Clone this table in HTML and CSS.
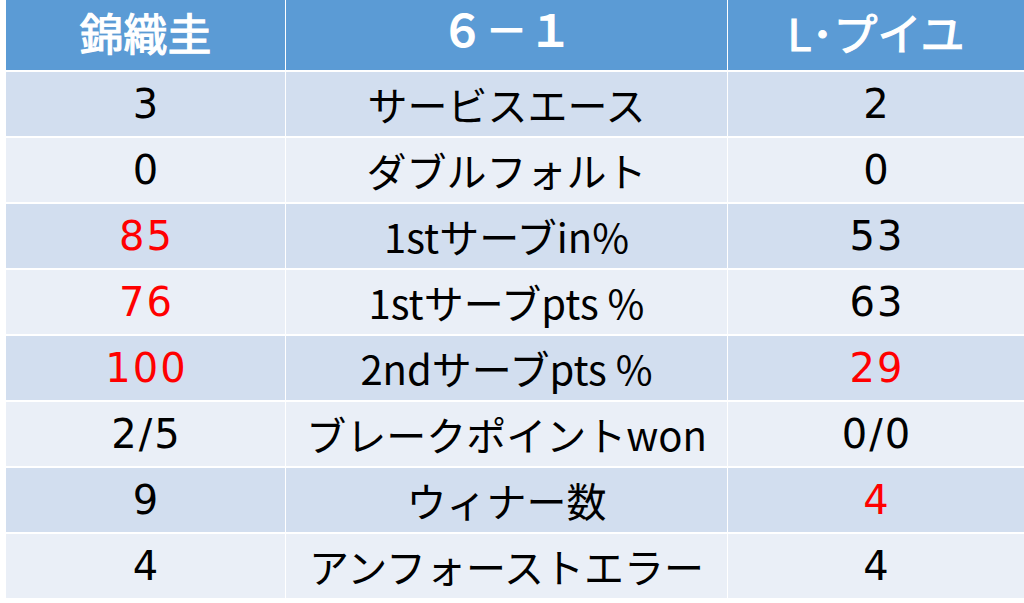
FILE: index.html
```html
<!DOCTYPE html>
<html lang="ja">
<head>
<meta charset="utf-8">
<link rel="stylesheet" href="styles.css">
</head>
<body>
<div class="table">
  <div class="cell head name">錦織圭</div>
  <div class="cell head score">６－１</div>
  <div class="cell head name">L･プイユ</div>

  <div class="cell odd num">3</div>
  <div class="cell odd label">サービスエース</div>
  <div class="cell odd num">2</div>

  <div class="cell even num">0</div>
  <div class="cell even label">ダブルフォルト</div>
  <div class="cell even num">0</div>

  <div class="cell odd num red">85</div>
  <div class="cell odd label">1stサーブin%</div>
  <div class="cell odd num">53</div>

  <div class="cell even num red">76</div>
  <div class="cell even label">1stサーブpts %</div>
  <div class="cell even num">63</div>

  <div class="cell odd num red">100</div>
  <div class="cell odd label">2ndサーブpts %</div>
  <div class="cell odd num red">29</div>

  <div class="cell even num">2/5</div>
  <div class="cell even label">ブレークポイントwon</div>
  <div class="cell even num">0/0</div>

  <div class="cell odd num">9</div>
  <div class="cell odd label">ウィナー数</div>
  <div class="cell odd num red">4</div>

  <div class="cell even num">4</div>
  <div class="cell even label">アンフォーストエラー</div>
  <div class="cell even num">4</div>
</div>
</body>
</html>
```

FILE: styles.css
```css
html, body {
  margin: 0;
  padding: 0;
  background: #ffffff;
}
body {
  width: 1024px;
  height: 603px;
  overflow: hidden;
  padding-left: 6px;
  box-sizing: border-box;
}
.table {
  display: grid;
  grid-template-columns: 279px 441px 296px;
  grid-template-rows: 70px repeat(8, 64px);
  column-gap: 1px;
  row-gap: 2px;
  background: #ffffff;
}
.cell {
  display: flex;
  align-items: center;
  justify-content: center;
  color: #000000;
  font-family: "Noto Sans CJK JP", "Noto Sans", sans-serif;
  font-size: 40px;
  line-height: 1;
  white-space: nowrap;
}
.head {
  background: #5b9bd5;
  color: #ffffff;
  font-weight: bold;
  font-size: 44px;
  padding-bottom: 6px;
  box-sizing: border-box;
}
.head.score {
  font-family: "DejaVu Sans", "Noto Sans CJK JP", sans-serif;
  font-size: 44px;
}
.head.name {
  font-weight: normal;
  -webkit-text-stroke: 1.2px #ffffff;
}
.odd {
  background: #d2deef;
}
.even {
  background: #eaeff7;
}
.num {
  font-family: "DejaVu Sans", "Noto Sans CJK JP", sans-serif;
  font-size: 40px;
  letter-spacing: 2px;
  padding-left: 2px;
  box-sizing: border-box;
}
.label {
  font-size: 40px;
}
.red {
  color: #ff0000;
}
```
